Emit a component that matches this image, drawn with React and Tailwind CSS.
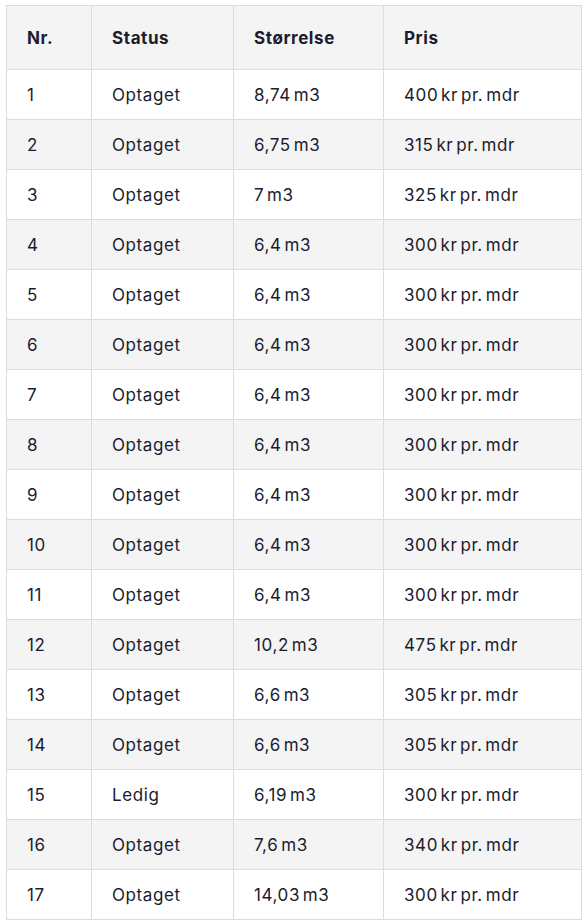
import React from "react";

const rows = [
  [1, "Optaget", "8,74 m3", "400 kr pr. mdr"],
  [2, "Optaget", "6,75 m3", "315 kr pr. mdr"],
  [3, "Optaget", "7 m3", "325 kr pr. mdr"],
  [4, "Optaget", "6,4 m3", "300 kr pr. mdr"],
  [5, "Optaget", "6,4 m3", "300 kr pr. mdr"],
  [6, "Optaget", "6,4 m3", "300 kr pr. mdr"],
  [7, "Optaget", "6,4 m3", "300 kr pr. mdr"],
  [8, "Optaget", "6,4 m3", "300 kr pr. mdr"],
  [9, "Optaget", "6,4 m3", "300 kr pr. mdr"],
  [10, "Optaget", "6,4 m3", "300 kr pr. mdr"],
  [11, "Optaget", "6,4 m3", "300 kr pr. mdr"],
  [12, "Optaget", "10,2 m3", "475 kr pr. mdr"],
  [13, "Optaget", "6,6 m3", "305 kr pr. mdr"],
  [14, "Optaget", "6,6 m3", "305 kr pr. mdr"],
  [15, "Ledig", "6,19 m3", "300 kr pr. mdr"],
  [16, "Optaget", "7,6 m3", "340 kr pr. mdr"],
  [17, "Optaget", "14,03 m3", "300 kr pr. mdr"],
];

const cell = "border border-[#dcdcdc] px-5 pt-[3px] text-left align-middle";

export default function App() {
  return (
    <div className="min-h-screen bg-white pt-[5px] pl-[6px] font-['Inter',sans-serif] text-[#1b1c2e]">
      <table className="w-[576px] table-fixed border-collapse text-[17px] tracking-[0.035em] [word-spacing:-2.5px]">
        <colgroup>
          <col className="w-[85px]" />
          <col className="w-[142px]" />
          <col className="w-[150px]" />
          <col />
        </colgroup>
        <thead>
          <tr className="h-[64px] bg-[#f4f4f4] font-bold">
            <th className={cell}>Nr.</th>
            <th className={cell}>Status</th>
            <th className={cell}>Størrelse</th>
            <th className={cell}>Pris</th>
          </tr>
        </thead>
        <tbody>
          {rows.map((r, i) => (
            <tr
              key={r[0]}
              className={`h-[50px] ${i % 2 === 1 ? "bg-[#f4f4f4]" : "bg-white"}`}
            >
              {r.map((v, j) => (
                <td key={j} className={cell}>
                  {v}
                </td>
              ))}
            </tr>
          ))}
        </tbody>
      </table>
    </div>
  );
}
